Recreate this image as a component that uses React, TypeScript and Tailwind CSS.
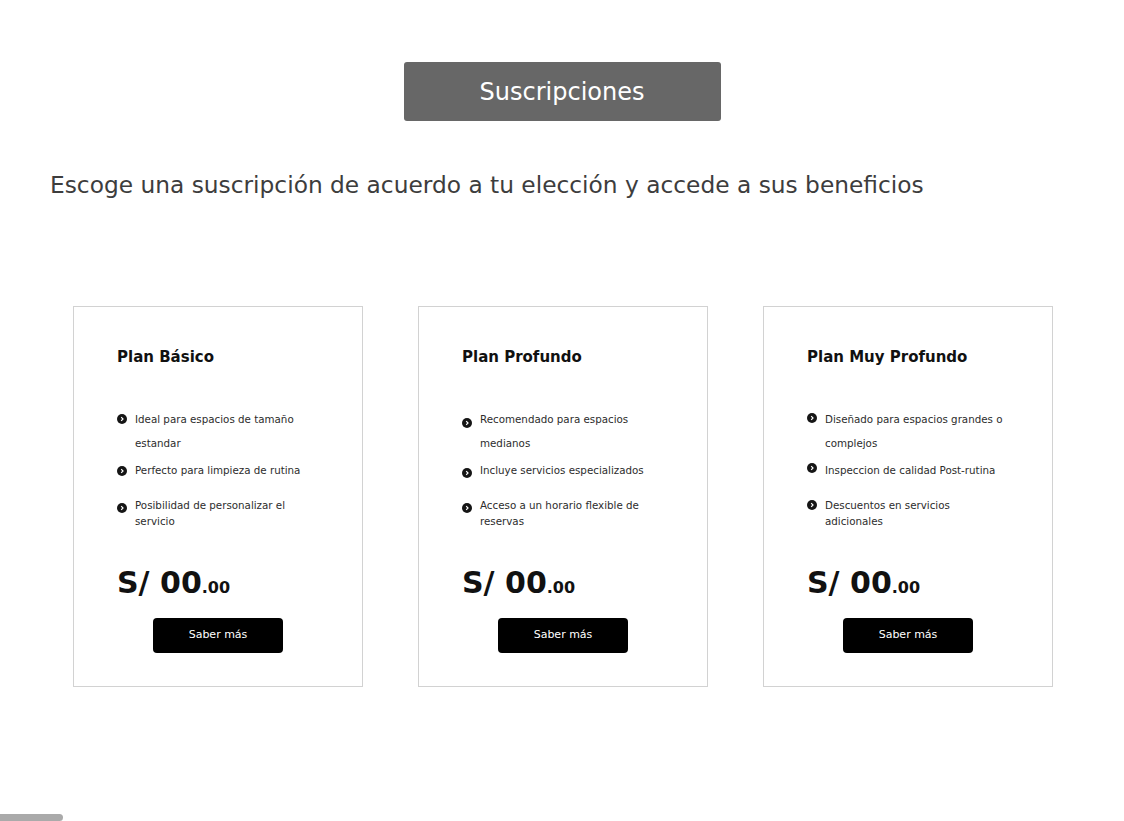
const plans = [
  {
    title: "Plan Básico",
    features: [
      { lines: ["Ideal para espacios de tamaño", "estandar"], tall: true, icon: "mt-[7px]" },
      { lines: ["Perfecto para limpieza de rutina"], tall: true, icon: "mt-[8px]" },
      { lines: ["Posibilidad de personalizar el", "servicio"], tall: false, icon: "mt-[6px]" },
    ],
  },
  {
    title: "Plan Profundo",
    features: [
      { lines: ["Recomendado para espacios", "medianos"], tall: true, icon: "mt-[11px]" },
      { lines: ["Incluye servicios especializados"], tall: true, icon: "mt-[10px]" },
      { lines: ["Acceso a un horario flexible de", "reservas"], tall: false, icon: "mt-[6px]" },
    ],
  },
  {
    title: "Plan Muy Profundo",
    features: [
      { lines: ["Diseñado para espacios grandes o", "complejos"], tall: true, icon: "mt-[6px]" },
      { lines: ["Inspeccion de calidad Post-rutina"], tall: true, icon: "mt-[5px]" },
      { lines: ["Descuentos en servicios", "adicionales"], tall: false, icon: "mt-[3px]" },
    ],
  },
];

function Bullet({ className }: { className: string }) {
  return (
    <svg width="10" height="10" viewBox="0 0 10 10" className={`shrink-0 ${className}`}>
      <circle cx="5" cy="5" r="5" fill="#151515" />
      <path d="M4.2 3.2 L6 5 L4.2 6.8" stroke="#fff" strokeWidth="1.2" fill="none" />
    </svg>
  );
}

export default function App() {
  return (
    <main className="min-h-screen bg-white font-['DejaVu_Sans',sans-serif] text-[#222]">
      <div className="flex justify-center pt-[62px]">
        <div className="w-[317px] h-[59px] bg-[#676767] rounded-[3px] flex items-center justify-center text-white text-[24px]">
          Suscripciones
        </div>
      </div>

      <p className="mt-[49px] pl-[50px] text-[23.3px] leading-[30px] text-[#3d3d3d]">
        Escoge una suscripción de acuerdo a tu elección y accede a sus beneficios
      </p>

      <div className="flex gap-[55px] pl-[73px] mt-[106px]">
        {plans.map((plan) => (
          <div
            key={plan.title}
            className="w-[290px] h-[381px] border border-[#d2d2d2] pl-[43px] pt-[40px] flex flex-col"
          >
            <h2 className="text-[15px] leading-[20px] font-bold text-[#111]">
              {plan.title}
            </h2>

            <div className="mt-[40px] flex flex-col">
              {plan.features.map((f, i) => (
                <div
                  key={i}
                  className={`flex items-start gap-[8px] ${i === 2 ? "mt-[15px]" : i === 1 ? "mt-[3px]" : ""}`}
                >
                  <Bullet className={f.icon} />
                  <p
                    className={`text-[10.3px] text-[#2c2c2c] ${f.tall ? "leading-[24px]" : "leading-[16px]"}`}
                  >
                    {f.lines.map((l, j) => (
                      <span key={j} className="block whitespace-nowrap">
                        {l}
                      </span>
                    ))}
                  </p>
                </div>
              ))}
            </div>

            <div className="mt-[39px] text-[30px] leading-[30px] font-bold text-[#111]">
              S/ 00<span className="text-[16px]">.00</span>
            </div>

            <div className="mt-[15px] pr-[43px] flex justify-center">
              <button className="w-[130px] h-[35px] bg-black text-white text-[11px] rounded-[4px]">
                Saber más
              </button>
            </div>
          </div>
        ))}
      </div>

      <div className="fixed bottom-0 left-0 w-[63px] h-[7px] bg-[#aaaaaa] rounded-r-full" />
    </main>
  );
}
